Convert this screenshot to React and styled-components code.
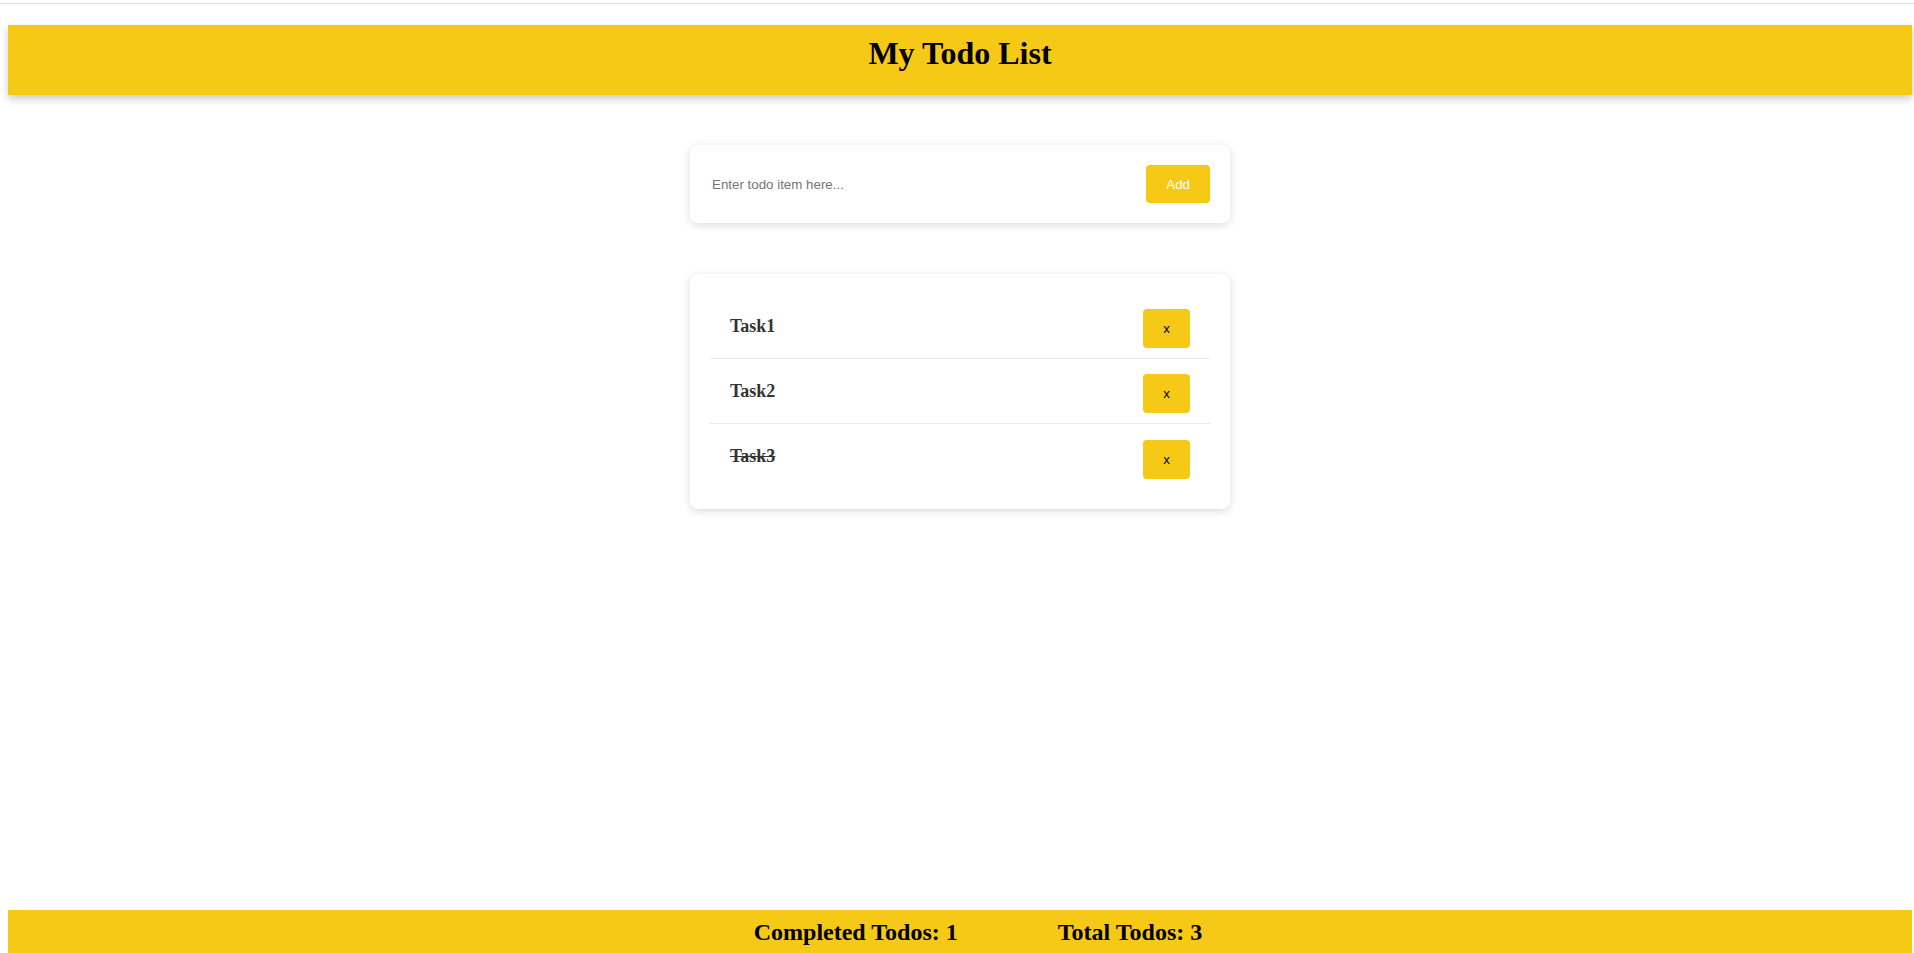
import React, { useState } from 'react'
import styled, { createGlobalStyle } from 'styled-components'

const GlobalStyle = createGlobalStyle`
  body {
    margin: 0;
    font-family: "Liberation Serif", "Times New Roman", serif;
    background: #fff;
  }
`

const Root = styled.div`
  min-height: 100vh;
  display: flex;
  flex-direction: column;
  padding-top: 3px;
  box-sizing: border-box;
`

const TopRule = styled.div`
  height: 1px;
  background: #dedede;
`

const Shell = styled.div`
  flex: 1;
  display: flex;
  flex-direction: column;
  padding: 0 2px 0 8px;
`

const Header = styled.header`
  margin-top: 21px;
  height: 70px;
  box-sizing: border-box;
  padding-top: 10px;
  background: #f6c917;
  box-shadow: 0 4px 8px rgba(0, 0, 0, 0.2);
  text-align: center;
`

const Title = styled.h1`
  margin: 0;
  font-size: 32px;
  font-weight: bold;
  color: #000;
`

const Main = styled.main`
  display: flex;
  flex-direction: column;
  align-items: center;
  gap: 51px;
  padding-top: 50px;
`

const Card = styled.div`
  width: 540px;
  box-sizing: border-box;
  padding: 20px;
  background: #fff;
  border-radius: 8px;
  box-shadow: 0 2px 8px rgba(0, 0, 0, 0.15);
`

const InputRow = styled.form`
  display: flex;
  align-items: center;
  gap: 12px;
`

const TodoInput = styled.input`
  flex: 1;
  border: none;
  outline: none;
  padding: 1px 2px;
  font-family: "Liberation Sans", Arial, sans-serif;
  font-size: 13.33px;
  color: #333;

  &::placeholder {
    color: #757575;
  }
`

const YellowButton = styled.button`
  border: none;
  border-radius: 4px;
  background: #f6c917;
  padding: 0 20px;
  height: ${p => p.$h}px;
  font-family: "Liberation Sans", Arial, sans-serif;
  font-size: 13.33px;
  color: ${p => (p.$light ? '#fff' : '#000')};
  cursor: pointer;
`

const List = styled.ul`
  list-style: none;
  margin: 0;
  padding: 0;
`

const Item = styled.li`
  display: flex;
  align-items: center;
  justify-content: space-between;
  height: 65px;
  box-sizing: border-box;
  padding: 15px 20px 10px;
  border-bottom: 1px solid #e8e8e8;

  &:last-child {
    border-bottom: none;
  }
`

const TaskText = styled.span`
  align-self: flex-start;
  margin-top: 7px;
  font-size: 18px;
  font-weight: bold;
  color: #333;
  text-decoration: ${p => (p.$done ? 'line-through' : 'none')};
`

const Footer = styled.footer`
  margin-top: auto;
  height: 43px;
  box-sizing: border-box;
  padding: 9px 0 0 36px;
  background: #f6c917;
  display: flex;
  justify-content: center;
  gap: 100px;
`

const Stat = styled.h2`
  margin: 0;
  font-size: 24px;
  font-weight: bold;
  color: #000;
`

const initial = [
  { id: 1, text: 'Task1', done: false },
  { id: 2, text: 'Task2', done: false },
  { id: 3, text: 'Task3', done: true },
]

export default function App() {
  const [todos, setTodos] = useState(initial)
  const [value, setValue] = useState('')

  const add = e => {
    e.preventDefault()
    if (!value.trim()) return
    setTodos([...todos, { id: Date.now(), text: value, done: false }])
    setValue('')
  }

  const toggle = id =>
    setTodos(todos.map(t => (t.id === id ? { ...t, done: !t.done } : t)))

  const remove = id => setTodos(todos.filter(t => t.id !== id))

  return (
    <Root>
      <GlobalStyle />
      <TopRule />
      <Shell>
        <Header>
          <Title>My Todo List</Title>
        </Header>
        <Main>
          <Card>
            <InputRow onSubmit={add}>
              <TodoInput
                placeholder="Enter todo item here..."
                value={value}
                onChange={e => setValue(e.target.value)}
              />
              <YellowButton type="submit" $light $h={38}>Add</YellowButton>
            </InputRow>
          </Card>
          <Card>
            <List>
              {todos.map(t => (
                <Item key={t.id}>
                  <TaskText $done={t.done} onClick={() => toggle(t.id)}>{t.text}</TaskText>
                  <YellowButton $h={39} onClick={() => remove(t.id)}>x</YellowButton>
                </Item>
              ))}
            </List>
          </Card>
        </Main>
        <Footer>
          <Stat>Completed Todos: {todos.filter(t => t.done).length}</Stat>
          <Stat>Total Todos: {todos.length}</Stat>
        </Footer>
      </Shell>
    </Root>
  )
}
